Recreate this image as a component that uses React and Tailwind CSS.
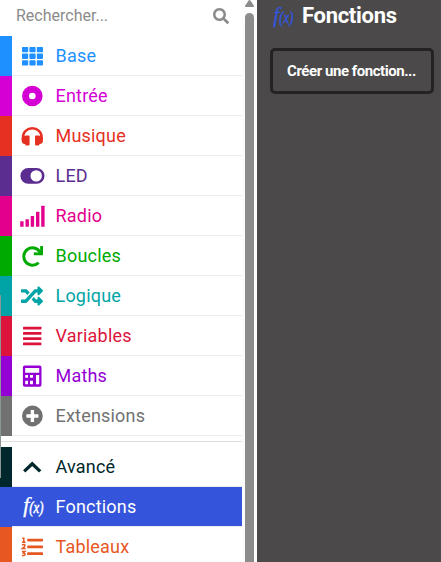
import React from 'react';
import { FaRandom, FaRedo, FaSearch } from 'react-icons/fa';

function Glyph({ children }) {
  return (
    <svg className="h-7 w-7 shrink-0" viewBox="0 0 28 28" fill="currentColor">
      {children}
    </svg>
  );
}

const GridIcon = () => (
  <Glyph>
    {[4, 11.4, 18.8].map((x) =>
      [5, 11.6, 18.2].map((y) => <rect key={x + '-' + y} x={x} y={y} width="6.2" height="5.3" rx="0.8" />)
    )}
  </Glyph>
);
const DotIcon = () => (
  <Glyph><circle cx="14.3" cy="14" r="6.8" fill="none" stroke="currentColor" strokeWidth="7" /></Glyph>
);
const HeadphonesIcon = () => (
  <Glyph>
    <path d="M4.9 18v-2.6a9.4 9.2 0 0 1 18.8 0v2.6" fill="none" stroke="currentColor" strokeWidth="2.4" />
    <path d="M3.7 16q1.6-2.4 4.4-2.4h2.3q1.2 0 1.2 1.2v7.4q0 1.2-1.2 1.2H8.4Q7.2 23.4 7.2 22.2q-3.4-.6-3.5-3z" />
    <path d="M24.9 16q-1.6-2.4-4.4-2.4h-2.3q-1.2 0-1.2 1.2v7.4q0 1.2 1.2 1.2h2q1.2 0 1.2-1.2q3.4-.6 3.5-3z" />
  </Glyph>
);
const ToggleIcon = () => (
  <Glyph>
    <path fillRule="evenodd" d="M10.3 6h8.3a7.8 7.8 0 0 1 0 15.8h-8.3a7.8 7.8 0 0 1 0-15.8zM18.2 8.2a5.7 5.7 0 1 0 0 11.4 5.7 5.7 0 0 0 0-11.4z" />
  </Glyph>
);
const SignalIcon = () => (
  <Glyph>
    <rect x="2.2" y="19.3" width="3.4" height="5.4" rx=".5" />
    <rect x="7.5" y="17.3" width="3.4" height="7.4" rx=".5" />
    <rect x="12.7" y="14" width="3.4" height="10.7" rx=".5" />
    <rect x="18" y="9.7" width="3.4" height="15" rx=".5" />
    <rect x="23.2" y="3.7" width="3.4" height="21" rx=".5" />
  </Glyph>
);
const LinesIcon = () => (
  <Glyph>
    {[4.8, 10, 15.2, 20.4].map((y) => <rect key={y} x="5" y={y} width="18.4" height="2.8" rx=".4" />)}
  </Glyph>
);
const CalcIcon = () => (
  <Glyph>
    <path fillRule="evenodd" d="M6.8 3.6h14.8a1.9 1.9 0 0 1 1.9 1.9v17.3a1.9 1.9 0 0 1-1.9 1.9H6.8a1.9 1.9 0 0 1-1.9-1.9V5.5a1.9 1.9 0 0 1 1.9-1.9zM7.2 5.9v4.8h14V5.9zM7.2 13v2.8h2.8v-2.8zM12 13v2.8h3v-2.8zM7.2 18.7v3.5h2.8v-3.5zM12 18.7v3.5h3v-3.5zM18 13v9.2h3.2v-9.2z" />
  </Glyph>
);
const PlusIcon = () => (
  <Glyph>
    <path fillRule="evenodd" d="M14.4 3.6a10.4 10.4 0 1 0 0 20.8 10.4 10.4 0 0 0 0-20.8zM12.7 8h3.4v4.3h4.3v3.4h-4.3v4.3h-3.4v-4.3H8.4v-3.4h4.3z" />
  </Glyph>
);
const ChevronIcon = () => (
  <Glyph><path d="M6.2 18.4l8-7.6 8 7.6" fill="none" stroke="currentColor" strokeWidth="3.3" /></Glyph>
);
const ListIcon = () => (
  <Glyph>
    {[5.7, 12.5, 19.3].map((y) => <rect key={y} x="9.2" y={y} width="15.8" height="2.7" rx=".6" />)}
    <g fill="none" stroke="currentColor" strokeWidth="1.5">
      <path d="M4.3 5.3h1.5v4.3M4 9.3h3.6" />
      <path d="M4 12q3-1 3 .4 0 1-2.5 3h3.2" />
      <path d="M4 18.4h3L5.4 20q1.7.2 1.7 1.3 0 1.6-3.2 1.1" />
    </g>
  </Glyph>
);
const FxIcon = () => (
  <svg
    className="h-7 w-7 shrink-0 overflow-visible font-['Liberation_Serif',serif] italic"
    viewBox="0 0 28 28"
    fill="currentColor"
    stroke="currentColor"
    strokeWidth="0.3"
  >
    <text x="5.2" y="18.6" fontSize="20" textLength="6" lengthAdjust="spacingAndGlyphs">f</text>
    <text x="11.2" y="20.4" fontSize="16" strokeWidth="0.5" textLength="14.2" lengthAdjust="spacingAndGlyphs">(x)</text>
  </svg>
);
const Fa = ({ icon: Icon, size }) => (
  <span className="flex h-7 w-7 shrink-0 items-center justify-center"><Icon size={size} /></span>
);

const basic = [
  { label: 'Base', bar: 'bg-[#1e90ff]', text: 'text-[#1e90ff]', icon: <GridIcon /> },
  { label: 'Entrée', bar: 'bg-[#d400d4]', text: 'text-[#d400d4]', icon: <DotIcon /> },
  { label: 'Musique', bar: 'bg-[#e63022]', text: 'text-[#e63022]', icon: <HeadphonesIcon /> },
  { label: 'LED', bar: 'bg-[#5c2d91]', text: 'text-[#5c2d91]', icon: <ToggleIcon /> },
  { label: 'Radio', bar: 'bg-[#e3008c]', text: 'text-[#e3008c]', icon: <SignalIcon /> },
  { label: 'Boucles', bar: 'bg-[#00aa00]', text: 'text-[#00aa00]', icon: <Fa icon={FaRedo} size={21} /> },
  { label: 'Logique', bar: 'bg-[#00a4a6]', text: 'text-[#00a4a6]', icon: <Fa icon={FaRandom} size={22} /> },
  { label: 'Variables', bar: 'bg-[#dc143c]', text: 'text-[#dc143c]', icon: <LinesIcon /> },
  { label: 'Maths', bar: 'bg-[#9400d3]', text: 'text-[#9400d3]', icon: <CalcIcon /> },
  { label: 'Extensions', bar: 'bg-[#717171]', text: 'text-[#717171]', icon: <PlusIcon /> },
];
const advanced = [
  { label: 'Avancé', bar: 'bg-[#00272b]', text: 'text-[#00272b]', icon: <ChevronIcon /> },
  { label: 'Fonctions', bar: 'bg-[#3455db]', text: 'bg-[#3455db] text-white', icon: <FxIcon /> },
  { label: 'Tableaux', bar: 'bg-[#e65722]', text: 'text-[#e65722]', icon: <ListIcon /> },
];

function Row({ item }) {
  return (
    <div className="flex h-10 w-[242px] shrink-0">
      <div className={'w-3 ' + item.bar} />
      <div className={'flex flex-1 items-center border-b border-[#ececec] pl-1.5 pt-px ' + item.text}>
        {item.icon}
        <span className="ml-[9.5px] text-[18px] leading-6 tracking-[0.2px]">{item.label}</span>
      </div>
    </div>
  );
}

export default function App() {
  return (
    <div className="relative flex h-[562px] w-[441px] overflow-hidden bg-white font-[Roboto,sans-serif]">
      <div className="flex w-[242px] shrink-0 flex-col">
        <div className="flex h-9 shrink-0 items-start justify-between pl-4 pr-[13px] pt-[5px] text-[#8b8b8b]">
          <span className="text-[16px] leading-[21px]">Rechercher...</span>
          <FaSearch className="mt-[3px]" size={16} />
        </div>
        {basic.map((item) => <Row key={item.label} item={item} />)}
        <div className="mb-[5px] mt-[5px] h-px shrink-0 bg-[#dfdfdf]" />
        {advanced.map((item) => <Row key={item.label} item={item} />)}
      </div>
      <div className="flex w-[15px] shrink-0 flex-col items-center bg-[#fcfcfc]">
        <svg className="h-[13px] w-[9px] shrink-0" viewBox="0 0 9 13" fill="#8b8b8b">
          <path d="M3.7.4q.8-.8 1.6 0L8.8 5.5Q9.2 7 8 7H1Q-.2 7 .2 5.5z" />
        </svg>
        <div className="w-[9px] flex-1 rounded-t-full bg-[#8b8b8b]" />
      </div>
      <div className="flex flex-1 flex-col items-start bg-[#4b4949] pl-[13px]">
        <div className="flex h-[48px] items-start pt-[3px]">
          <span className="-ml-0.5 text-[#3455db]"><FxIcon /></span>
          <span className="ml-[6px] text-[22px] font-bold leading-[26px] tracking-[-0.3px] text-white">Fonctions</span>
        </div>
        <button className="h-[46px] w-[164px] whitespace-nowrap rounded-[5px] border-[3px] border-[#242323] pr-px text-[15px] font-bold tracking-[-0.45px] text-white">
          Créer une fonction...
        </button>
      </div>
      <div className="absolute left-0 top-[295px] h-[183px] w-px bg-[#8c9696]" />
    </div>
  );
}
